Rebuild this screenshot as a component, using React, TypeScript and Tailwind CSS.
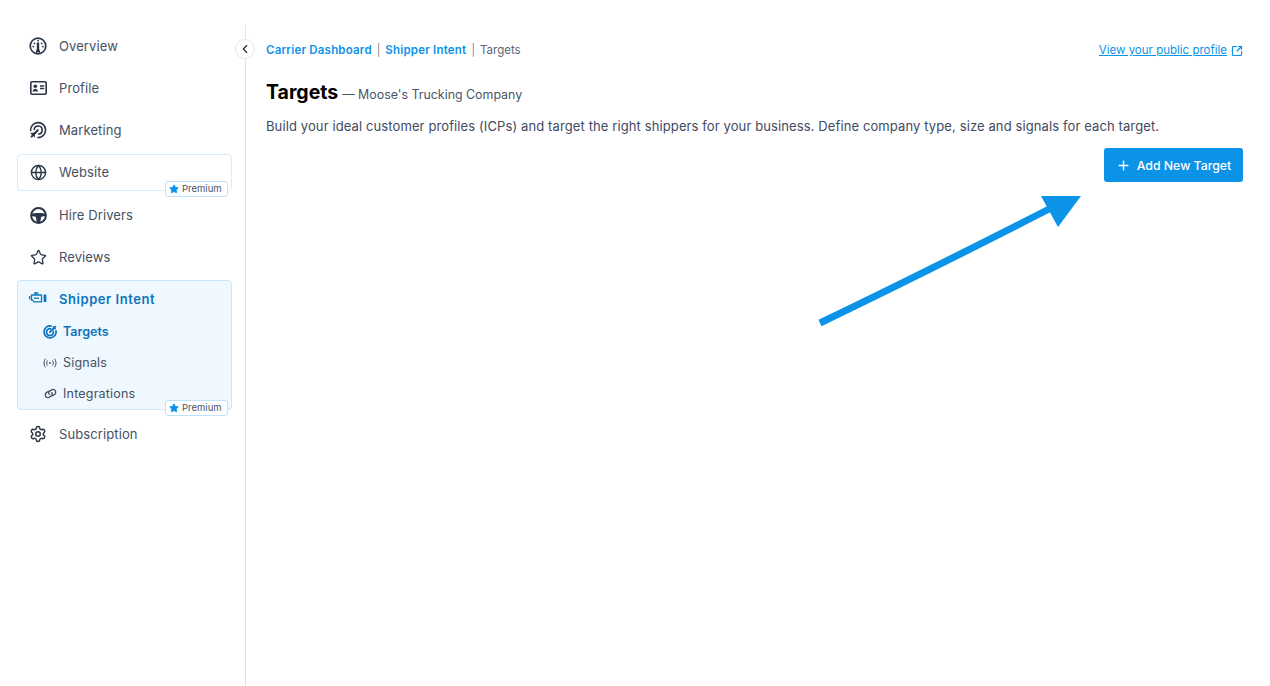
import React from "react";
import { ChevronLeft, Globe, Plus, Settings, Star, SquareArrowOutUpRight } from "lucide-react";

const OverviewIcon = () => (
  <svg width="18" height="18" viewBox="0 0 18 18" fill="none" stroke="currentColor" strokeWidth="1.7" strokeLinecap="round">
    <circle cx="9" cy="9" r="7.8" />
    <path d="M9 6.5v5" strokeWidth="2.4" />
    <path d="M5.4 6.4h.1M12.6 6.4h.1M9 3.6h.1M4.2 9.6h.1M13.8 9.6h.1" strokeWidth="1.7" />
    <path d="M7.2 15.5l1-3.4h1.6l1 3.4" fill="currentColor" strokeWidth="1" />
  </svg>
);

const ProfileIcon = () => (
  <svg width="17" height="14" viewBox="0 0 17 14" fill="none">
    <rect x="0.8" y="0.8" width="15.4" height="12.4" rx="1.2" stroke="currentColor" strokeWidth="1.6" />
    <circle cx="5.3" cy="5.2" r="1.8" fill="currentColor" />
    <path d="M2.6 10.6c.3-2 1.4-2.8 2.7-2.8s2.4.8 2.7 2.8z" fill="currentColor" />
    <path d="M10 5h4.2M10 7.5h4.2" stroke="currentColor" strokeWidth="1.3" />
  </svg>
);

const MarketingIcon = () => (
  <svg width="18" height="18" viewBox="0 0 18 18" fill="none" stroke="currentColor" strokeWidth="1.6" strokeLinecap="round">
    <path d="M1.6 9.5A7.5 7.5 0 1 1 9 16.6" />
    <path d="M5.2 8.5A4 4 0 1 1 9.6 13" />
    <path d="M8.8 9.2L2.6 15.6" strokeWidth="2" />
    <path d="M1 12l5.2-.6 -.4 5z" fill="currentColor" stroke="none" />
  </svg>
);

const WheelIcon = () => (
  <svg width="17" height="17" viewBox="0 0 17 17" fill="none">
    <circle cx="8.5" cy="8.5" r="7.4" stroke="currentColor" strokeWidth="2" />
    <path d="M1.5 7C4 5.6 13 5.6 15.5 7V9L11.2 9.8 10.2 15.5H6.8L5.8 9.8 1.5 9Z" fill="currentColor" />
  </svg>
);

const EngineIcon = () => (
  <svg width="18" height="12" viewBox="0 0 18 12" fill="none" stroke="currentColor" strokeWidth="1.3" strokeLinejoin="round">
    <path d="M2.5 3h10v6.8H5L3.8 8.2H2.5z" />
    <path d="M5 1h4.5M7 1v2M.6 4v3.6" />
    <path d="M5 6.2h5" />
    <rect x="14.6" y="2.4" width="2.8" height="7.6" rx="0.6" fill="currentColor" stroke="none" />
  </svg>
);

const TargetIcon = () => (
  <svg width="14" height="14" viewBox="0 0 14 14" fill="none" stroke="currentColor" strokeWidth="1.7" strokeLinecap="round">
    <path d="M8.2 1A6 6 0 1 0 13 5.8" />
    <path d="M7.7 3.8A3.4 3.4 0 1 0 10.3 6.4" />
    <path d="M6.8 7.2L12.4 1.6" />
    <path d="M10.4 1.6v2h2" strokeWidth="1.3" />
  </svg>
);

const SignalIcon = () => (
  <svg width="14" height="10" viewBox="0 0 14 10" fill="none" stroke="currentColor" strokeWidth="1" strokeLinecap="round">
    <path d="M2.2 1C.5 3.5.5 6.5 2.2 9M4.3 2.8c-.9 1.4-.9 3 0 4.4M11.8 1c1.7 2.5 1.7 5.5 0 8M9.7 2.8c.9 1.4.9 3 0 4.4" />
    <circle cx="7" cy="5" r="0.9" fill="currentColor" stroke="none" />
  </svg>
);

const LinkIcon = () => (
  <svg width="13" height="11" viewBox="0 0 13 11" fill="none" stroke="currentColor" strokeWidth="1.3" strokeLinecap="round">
    <path d="M5.4 3.2L3.5 3.8C1.9 4.4 1 5.6 1.4 7.5c.5 1.9 2.1 2.5 3.6 1.9l2.4-1.7c1.2-1 1.1-2.3.3-3" />
    <path d="M7.6 7.8l1.9-.6c1.6-.6 2.5-1.8 2.1-3.7-.5-1.9-2.1-2.5-3.6-1.9L5.6 3.3c-1.2 1-1.1 2.3-.3 3" />
  </svg>
);

const PremiumBadge = () => (
  <div className="absolute right-[3px] bottom-[-7px] flex h-[16px] w-[63px] items-center gap-[3px] rounded-[3px] border border-[#bfe3fb] bg-white pl-[3px] text-[9.5px] leading-none text-[#4a5568]">
    <Star size={10} className="fill-[#0b93e8] text-[#0b93e8]" />
    Premium
  </div>
);

const NavItem = ({ icon, label }: { icon: React.ReactNode; label: string }) => (
  <div className="flex h-[36px] items-center">
    <div className="flex w-[42px] justify-center text-[#2b3648]">{icon}</div>
    <span className="pt-[2px] text-[13px] tracking-[0.1px] text-[#465063]">{label}</span>
  </div>
);

const SubItem = ({ icon, label, active }: { icon: React.ReactNode; label: string; active?: boolean }) => (
  <div className={active ? "flex h-[31px] items-center text-[#0b74bd]" : "flex h-[31px] items-center text-[#465063]"}>
    <div className="flex w-[46px] justify-end pr-[6px]">{icon}</div>
    <span className={active ? "pt-[2px] text-[12.5px] font-semibold" : "pt-[2px] text-[12.5px] tracking-[0.2px]"}>{label}</span>
  </div>
);

export default function App() {
  return (
    <div className="relative flex h-[686px] w-[1270px] overflow-hidden bg-white pt-[25px] font-['Inter',sans-serif]">
      <aside className="relative flex w-[246px] shrink-0 flex-col gap-[6px] border-r border-[#dfe3e8] pt-[3px] pl-[17px] pr-[13px]">
        <button className="absolute top-[14px] right-[-10px] flex h-[20px] w-[20px] items-center justify-center rounded-full border border-[#e2e5ea] bg-white text-[#222b3a]">
          <ChevronLeft size={14} strokeWidth={2} />
        </button>
        <NavItem icon={<OverviewIcon />} label="Overview" />
        <NavItem icon={<ProfileIcon />} label="Profile" />
        <NavItem icon={<MarketingIcon />} label="Marketing" />
        <div className="relative h-[37px] rounded-[4px] border border-[#d6edfd]">
          <div className="-mx-px -mt-px">
            <NavItem icon={<Globe size={17} strokeWidth={2} />} label="Website" />
          </div>
          <PremiumBadge />
        </div>
        <NavItem icon={<WheelIcon />} label="Hire Drivers" />
        <NavItem icon={<Star size={17} strokeWidth={1.8} />} label="Reviews" />
        <div className="relative -mt-px h-[130px] rounded-[4px] border border-[#c9e7fc] bg-[#eff8fe]">
          <div className="-mx-px -mt-px">
            <div className="flex h-[36px] items-center text-[#0b74bd]">
              <div className="flex w-[42px] justify-center"><EngineIcon /></div>
              <span className="pt-[4px] text-[13px] font-semibold tracking-[0.55px]">Shipper Intent</span>
            </div>
            <SubItem active icon={<TargetIcon />} label="Targets" />
            <SubItem icon={<SignalIcon />} label="Signals" />
            <SubItem icon={<LinkIcon />} label="Integrations" />
          </div>
          <PremiumBadge />
        </div>
        <NavItem icon={<Settings size={18} strokeWidth={2} />} label="Subscription" />
      </aside>

      <main className="flex-1 pt-[16px] pr-[27px] pl-[20px]">
        <div className="flex h-[18px] items-center justify-between text-[11.5px]">
          <div className="flex items-center gap-[5px] pt-[2px] text-[#5b6472]">
            <span className="font-semibold tracking-[0.2px] text-[#0b93e8]">Carrier Dashboard</span>
            <span className="font-light">|</span>
            <span className="font-semibold tracking-[0.2px] text-[#0b93e8]">Shipper Intent</span>
            <span className="font-light">|</span>
            <span>Targets</span>
          </div>
          <div className="flex items-center gap-[4px] pt-[2px] text-[11.5px] text-[#0b93e8]">
            <span className="underline">View your public profile</span>
            <SquareArrowOutUpRight size={12} strokeWidth={2.4} />
          </div>
        </div>
        <div className="mt-[19px] flex items-baseline gap-[4px]">
          <h1 className="text-[19.5px] leading-[28px] font-bold text-black">Targets</h1>
          <span className="text-[12.4px] text-[#4a5568]">— Moose's Trucking Company</span>
        </div>
        <p className="mt-[10px] text-[13px] leading-[20px] tracking-[0.11px] text-[#3f4a5f]">
          Build your ideal customer profiles (ICPs) and target the right shippers for your business. Define company type, size and signals for each target.
        </p>
        <div className="mt-[12px] flex justify-end">
          <button className="flex h-[34px] w-[139px] items-center justify-center gap-[6px] rounded-[3px] bg-[#0b93e8] text-[12.3px] font-medium text-white">
            <Plus size={15} strokeWidth={2.2} />
            <span className="pt-[2px]">Add New Target</span>
          </button>
        </div>
      </main>

      <svg className="absolute top-[190px] left-[810px]" width="280" height="140" viewBox="0 0 280 140" fill="none">
        <path d="M10 133Q120 80 243 17" stroke="#0b93e8" strokeWidth="7" />
        <path d="M231 6H271L248 37Z" fill="#0b93e8" />
      </svg>
    </div>
  );
}
